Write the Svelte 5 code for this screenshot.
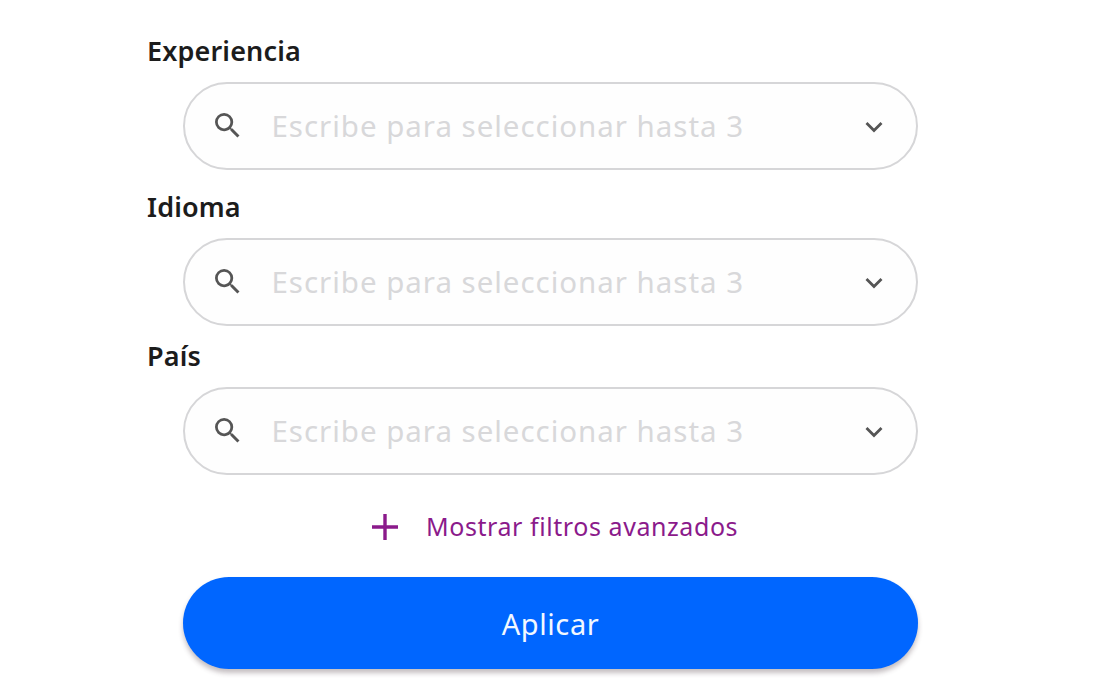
<script lang="ts">
	const fields = [
		{ id: 'experiencia', label: 'Experiencia' },
		{ id: 'idioma', label: 'Idioma' },
		{ id: 'pais', label: 'País' }
	];
	const values: Record<string, string> = $state({ experiencia: '', idioma: '', pais: '' });
</script>

<form class="filters">
	{#each fields as field}
		<div class="field {field.id}">
			<label for={field.id}>{field.label}</label>
			<div class="box">
				<svg class="search" viewBox="3 3 17.49 17.49" aria-hidden="true">
					<path
						d="M15.5 14h-.79l-.28-.27A6.47 6.47 0 0 0 16 9.5 6.5 6.5 0 1 0 9.5 16c1.61 0 3.09-.59 4.23-1.57l.27.28v.79l5 4.99L20.49 19l-4.99-5zm-6 0C7.01 14 5 11.99 5 9.5S7.01 5 9.5 5 14 7.01 14 9.5 11.99 14 9.5 14z"
					/>
				</svg>
				<input id={field.id} placeholder="Escribe para seleccionar hasta 3" bind:value={values[field.id]} />
				<svg class="chevron" viewBox="0 0 18 12" aria-hidden="true">
					<path d="M1.5 2l7.5 7.5L16.500 2" />
				</svg>
			</div>
		</div>
	{/each}
	<button type="button" class="more">
		<svg viewBox="0 0 26 26" aria-hidden="true"><path d="M13 0v26M0 13h26" /></svg>
		<span>Mostrar filtros avanzados</span>
	</button>
	<button type="button" class="apply">Aplicar</button>
</form>

<style>
	:global(body) {
		background: #fff;
	}

	.filters {
		box-sizing: border-box;
		width: 918px;
		height: 696px;
		padding: 32px 0 0 147px;
		font-family: 'Noto Sans', sans-serif;
	}

	.field {
		height: 156px;
	}

	.idioma {
		height: 149px;
	}

	label {
		display: block;
		height: 50px;
		line-height: 38px;
		font-size: 27px;
		font-weight: 600;
		letter-spacing: 0.15px;
		color: #1c1c1c;
	}

	.box {
		box-sizing: border-box;
		display: flex;
		align-items: center;
		height: 88px;
		margin-left: 36px;
		padding: 0 33px 0 30px;
		border: 2px solid #d6d6d8;
		border-radius: 44px;
		background: #fefefe;
	}

	.search {
		flex: none;
		width: 24.5px;
		height: 24.5px;
		margin-bottom: 1px;
		fill: #555;
	}

	input {
		flex: 1;
		min-width: 0;
		margin: 0 0 1px 32px;
		padding: 0;
		border: 0;
		outline: 0;
		background: none;
		font: 400 29.5px 'Noto Sans', sans-serif;
		letter-spacing: 0.97px;
		color: #444;
	}

	input::placeholder {
		color: #d8d8da;
		opacity: 1;
	}

	.chevron {
		flex: none;
		width: 18px;
		height: 12px;
		margin-top: 1px;
		fill: none;
		stroke: #555;
		stroke-width: 2.8;
	}

	button {
		border: 0;
		font-family: inherit;
		cursor: pointer;
	}

	.more {
		display: flex;
		align-items: center;
		gap: 28px;
		height: 60px;
		margin: 4px 0 0 225px;
		padding: 0;
		background: none;
		color: #8b1a8b;
		font-size: 25px;
		letter-spacing: 0.57px;
		white-space: nowrap;
	}

	.more svg {
		width: 26px;
		height: 26px;
		stroke: currentColor;
		stroke-width: 3.4;
	}

	.more span {
		margin-bottom: 2px;
	}

	.apply {
		display: block;
		width: 735px;
		height: 92px;
		margin: 20px 0 0 36px;
		padding: 0;
		border-radius: 46px;
		background: #0066ff;
		box-shadow: 0 4px 5px rgba(60, 40, 50, 0.3);
		color: #f2f8ff;
		font-size: 29px;
		letter-spacing: 0.6px;
	}
</style>
